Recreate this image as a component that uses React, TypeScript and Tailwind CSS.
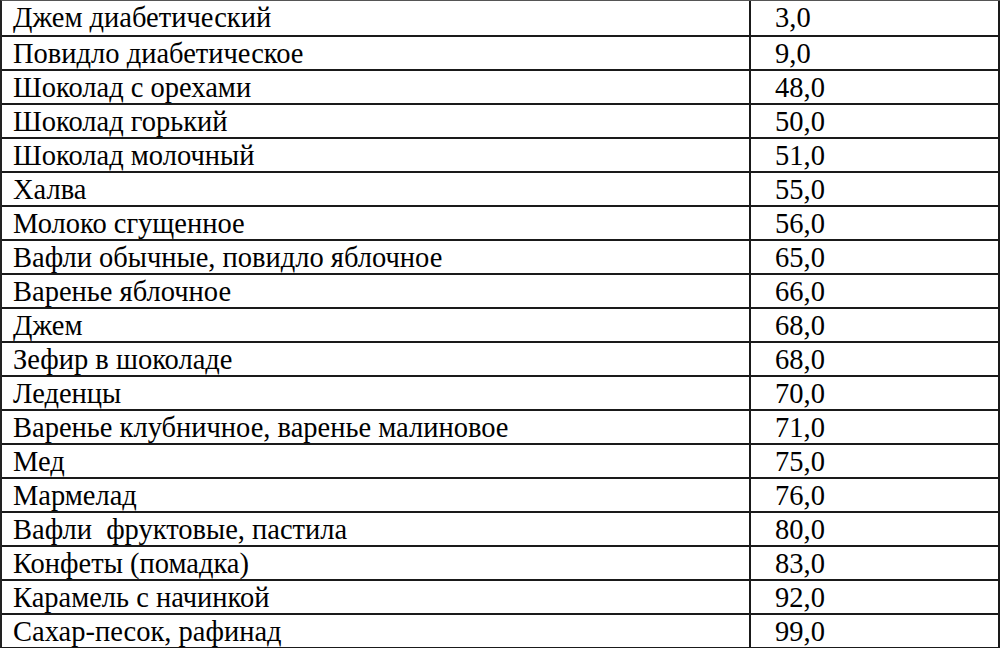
import React from "react";

const rows: [string, string][] = [
  ["Джем диабетический", "3,0"],
  ["Повидло диабетическое", "9,0"],
  ["Шоколад с орехами", "48,0"],
  ["Шоколад горький", "50,0"],
  ["Шоколад молочный", "51,0"],
  ["Халва", "55,0"],
  ["Молоко сгущенное", "56,0"],
  ["Вафли обычные, повидло яблочное", "65,0"],
  ["Варенье яблочное", "66,0"],
  ["Джем", "68,0"],
  ["Зефир в шоколаде", "68,0"],
  ["Леденцы", "70,0"],
  ["Варенье клубничное, варенье малиновое", "71,0"],
  ["Мед", "75,0"],
  ["Мармелад", "76,0"],
  ["Вафли  фруктовые, пастила", "80,0"],
  ["Конфеты (помадка)", "83,0"],
  ["Карамель с начинкой", "92,0"],
  ["Сахар-песок, рафинад", "99,0"],
];

export default function App() {
  return (
    <div className="w-[1000px] h-[648px] bg-white overflow-hidden text-black">
      <div className="w-[1000px] border-l-2 border-t border-[#555] border-l-[#222] border-b-2 border-b-[#1a1a1a]">
        {rows.map(([name, val], i) => (
          <div
            key={i}
            className={`grid grid-cols-[747px_251px] h-[34px] ${i === 0 ? "" : "border-t-2 border-[#1a1a1a]"}`}
          >
            <div className="font-['Liberation_Serif'] text-[28.5px] leading-[28px] pl-[11px] pt-[3px] whitespace-pre">
              {name}
            </div>
            <div className="font-['Liberation_Serif'] text-[28.5px] leading-[28px] pl-[24px] pt-[3px] border-l-2 border-r-2 border-[#1a1a1a]">
              {val}
            </div>
          </div>
        ))}
      </div>
    </div>
  );
}
